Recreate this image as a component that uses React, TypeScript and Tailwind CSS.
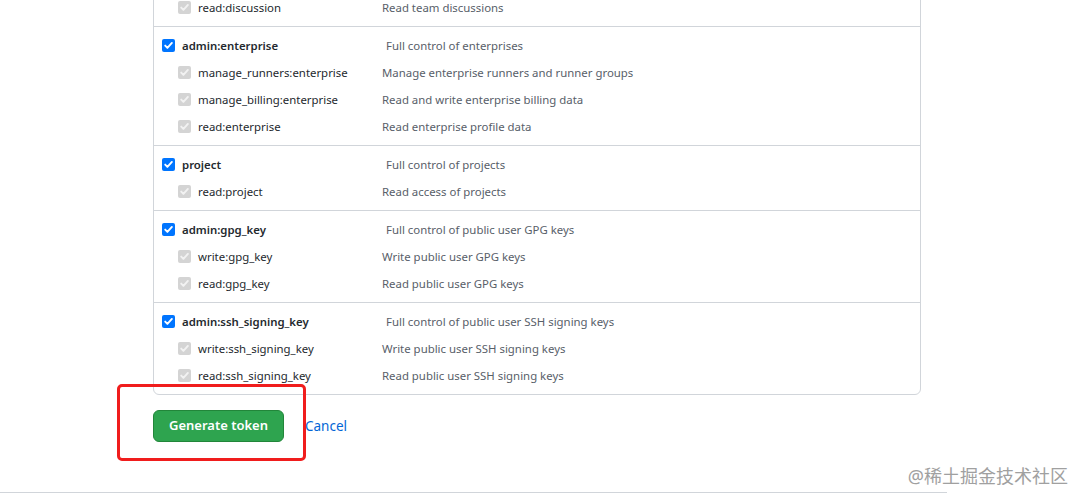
import React from "react";

type Child = { name: string; desc: string };
type Group = { name?: string; desc?: string; children: Child[] };

const groups: Group[] = [
  { children: [{ name: "read:discussion", desc: "Read team discussions" }] },
  {
    name: "admin:enterprise",
    desc: "Full control of enterprises",
    children: [
      { name: "manage_runners:enterprise", desc: "Manage enterprise runners and runner groups" },
      { name: "manage_billing:enterprise", desc: "Read and write enterprise billing data" },
      { name: "read:enterprise", desc: "Read enterprise profile data" },
    ],
  },
  {
    name: "project",
    desc: "Full control of projects",
    children: [{ name: "read:project", desc: "Read access of projects" }],
  },
  {
    name: "admin:gpg_key",
    desc: "Full control of public user GPG keys",
    children: [
      { name: "write:gpg_key", desc: "Write public user GPG keys" },
      { name: "read:gpg_key", desc: "Read public user GPG keys" },
    ],
  },
  {
    name: "admin:ssh_signing_key",
    desc: "Full control of public user SSH signing keys",
    children: [
      { name: "write:ssh_signing_key", desc: "Write public user SSH signing keys" },
      { name: "read:ssh_signing_key", desc: "Read public user SSH signing keys" },
    ],
  },
];

function Check({ disabled }: { disabled?: boolean }) {
  return (
    <span
      className={
        disabled
          ? "flex h-[13px] w-[13px] shrink-0 items-center justify-center rounded-[2px] bg-[#d4d4d4]"
          : "flex h-[13px] w-[13px] shrink-0 items-center justify-center rounded-[2px] bg-[#0075ff]"
      }
    >
      <svg width="11" height="11" viewBox="0 0 11 11">
        <path
          d="M2.2 5.6 L4.4 7.9 L8.9 2.9"
          fill="none"
          stroke={disabled ? "#f2f2f2" : "#ffffff"}
          strokeWidth="1.9"
          strokeLinecap="round"
          strokeLinejoin="round"
        />
      </svg>
    </span>
  );
}

export default function App() {
  return (
    <div
      className="relative h-[502px] w-[1086px] overflow-hidden bg-white text-[11.4px] text-[#24292e]"
      style={{ fontFamily: '"Noto Sans", "Open Sans", sans-serif' }}
    >
      <div className="ml-[153px] -mt-[7px] w-[768px]">
        <div className="rounded-[6px] border border-[#d1d5da]">
          {groups.map((g, i) => (
            <div key={i} className={i > 0 ? "border-t border-[#d1d5da] py-[5px]" : "pb-[5px]"}>
              {g.name && (
                <div className="flex h-[27px] items-center pl-[8px]">
                  <Check />
                  <span className="ml-[7px] w-[204px] font-semibold text-[#24292e]">{g.name}</span>
                  <span className="text-[#586069]">{g.desc}</span>
                </div>
              )}
              {g.children.map((c) => (
                <div key={c.name} className="flex h-[27px] items-center pl-[24px]">
                  <Check disabled />
                  <span className="ml-[7px] w-[184px] text-[#24292e]">{c.name}</span>
                  <span className="text-[#586069]">{c.desc}</span>
                </div>
              ))}
            </div>
          ))}
        </div>
        <div className="mt-[15px] flex items-center">
          <button className="h-[32px] w-[131px] rounded-[6px] border border-[#22863a] bg-[#2ea44f] text-[13px] font-semibold text-white">
            Generate token
          </button>
          <a className="ml-[21px] text-[13.5px] text-[#0366d6]">Cancel</a>
        </div>
      </div>

      <div className="pointer-events-none absolute left-[117px] top-[384px] h-[77px] w-[189px] rounded-[5px] border-[3px] border-[#f01d1d]" />

      <div className="absolute left-0 top-[492px] h-px w-[947px] bg-[#d1d5da]" />

      <div
        className="absolute right-[18px] top-[463px] text-[18px] text-[#a0a0a0]"
        style={{ fontFamily: '"Noto Sans", "Noto Sans CJK SC", sans-serif' }}
      >
        @稀土掘金技术社区
      </div>
    </div>
  );
}
